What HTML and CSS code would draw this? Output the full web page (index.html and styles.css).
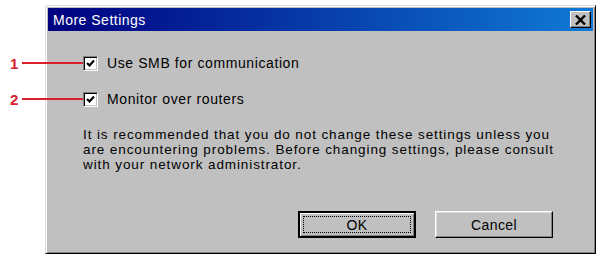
FILE: index.html
```html
<!DOCTYPE html>
<html>
<head>
<meta charset="utf-8">
<link rel="stylesheet" href="styles.css">
</head>
<body>
<div class="dialog">
  <div class="titlebar">
    <span class="title">More Settings</span>
    <span class="close">
      <svg width="11" height="10" viewBox="0 0 11 10"><path d="M1 0.5 L10 9.5 M10 0.5 L1 9.5" stroke="#000" stroke-width="2.4" fill="none"/></svg>
    </span>
  </div>
  <div class="body">
    <div class="row">
      <span class="callout"><span class="num">1</span><span class="line"></span></span>
      <span class="check"><svg width="9" height="9" viewBox="0 0 9 9"><path d="M1 4 L3.5 6.5 L8 1.5" stroke="#000" stroke-width="2.2" fill="none"/></svg></span>
      <span class="label">Use SMB for communication</span>
    </div>
    <div class="row">
      <span class="callout"><span class="num">2</span><span class="line"></span></span>
      <span class="check"><svg width="9" height="9" viewBox="0 0 9 9"><path d="M1 4 L3.5 6.5 L8 1.5" stroke="#000" stroke-width="2.2" fill="none"/></svg></span>
      <span class="label">Monitor over routers</span>
    </div>
    <p class="note">It is recommended that you do not change these settings unless you are encountering problems. Before changing settings, please consult with your network administrator.</p>
    <div class="buttons">
      <button class="btn default"><span class="focus">OK</span></button>
      <button class="btn">Cancel</button>
    </div>
  </div>
</div>
</body>
</html>
```

FILE: styles.css
```css
html, body {
  margin: 0;
  padding: 0;
  background: #ffffff;
  width: 600px;
  height: 259px;
  overflow: hidden;
}
body {
  padding-top: 5px;
  padding-left: 45px;
  box-sizing: border-box;
  font-family: "Liberation Sans", Arial, sans-serif;
  font-size: 13px;
  color: #000;
}
.dialog {
  width: 551px;
  height: 249px;
  box-sizing: border-box;
  background: #c0c0c0;
  border-top: 1px solid #dfdfdf;
  border-left: 1px solid #dfdfdf;
  border-right: 1px solid #000;
  border-bottom: 1px solid #000;
  box-shadow: inset 1px 1px 0 #fff, inset -1px -1px 0 #808080;
  padding: 2px;
  display: flex;
  flex-direction: column;
}
.titlebar {
  height: 23px;
  background: linear-gradient(to right, #000080, #0f7ad6);
  display: flex;
  align-items: center;
  justify-content: space-between;
  padding: 0 2px 0 5px;
}
.title {
  color: #fff;
  font-size: 14px;
  letter-spacing: 0.5px;
}
.close {
  width: 21px;
  height: 17px;
  box-sizing: border-box;
  background: #c0c0c0;
  border-top: 1px solid #fff;
  border-left: 1px solid #fff;
  border-right: 1px solid #000;
  border-bottom: 1px solid #000;
  box-shadow: inset -1px -1px 0 #808080;
  display: flex;
  align-items: center;
  justify-content: center;
}
.body {
  padding: 24px 40px 0 35px;
  display: flex;
  flex-direction: column;
}
.row {
  position: relative;
  display: flex;
  align-items: center;
  height: 16px;
  margin-bottom: 20px;
}
.callout {
  position: absolute;
  left: -73px;
  top: 0;
  height: 16px;
  display: flex;
  align-items: center;
}
.num {
  color: #d9202c;
  font-weight: bold;
  font-size: 15px;
  width: 12px;
}
.line {
  width: 61px;
  height: 2px;
  background: #d9202c;
}
.check {
  width: 15px;
  height: 15px;
  box-sizing: border-box;
  background: #fff;
  border-top: 1px solid #808080;
  border-left: 1px solid #808080;
  border-right: 1px solid #fff;
  border-bottom: 1px solid #fff;
  box-shadow: inset 1px 1px 0 #000, inset -1px -1px 0 #c0c0c0;
  display: flex;
  align-items: center;
  justify-content: center;
  margin-right: 9px;
}
.label {
  font-size: 14px;
  letter-spacing: 0.6px;
}
.note {
  margin: 0;
  width: 476px;
  line-height: 15px;
  font-size: 13.5px;
  letter-spacing: 0.9px;
}
.buttons {
  display: flex;
  justify-content: flex-end;
  gap: 19px;
  margin-top: 39px;
}
.btn {
  width: 118px;
  height: 27px;
  box-sizing: border-box;
  background: #c0c0c0;
  font-family: "Liberation Sans", Arial, sans-serif;
  font-size: 14px;
  letter-spacing: 0.4px;
  color: #000;
  border-top: 1px solid #fff;
  border-left: 1px solid #fff;
  border-right: 1px solid #000;
  border-bottom: 1px solid #000;
  box-shadow: inset -1px -1px 0 #808080, inset 1px 1px 0 #dfdfdf;
  padding: 0;
  display: flex;
  align-items: center;
  justify-content: center;
}
.btn.default {
  border: 2px solid #000;
  box-shadow: inset 1px 1px 0 #fff, inset -1px -1px 0 #808080;
  padding: 3px;
}
.focus {
  flex: 1;
  align-self: stretch;
  border: 1px dotted #000;
  display: flex;
  align-items: center;
  justify-content: center;
}
```
